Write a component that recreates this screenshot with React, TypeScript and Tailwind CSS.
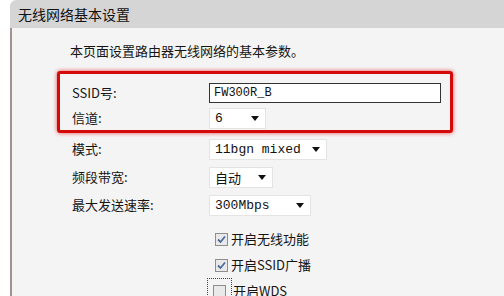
import React from "react";

const cjk = "font-['Noto_Sans_CJK_SC',sans-serif]";
const mono = "font-['Liberation_Mono','Noto_Sans_CJK_SC',monospace]";

const Arrow = () => (
  <svg width="8" height="5" viewBox="0 0 8 5" className="shrink-0">
    <path d="M0 0 L8 0 L4 5 Z" fill="#111" />
  </svg>
);

const Select = ({ value, width, cn }: { value: string; width: string; cn?: boolean }) => (
  <div
    className={`${width} h-[21px] bg-white border border-[#e4e4e4] flex items-center justify-between pl-[5px] pr-[6px] text-[13px] text-[#111] ${
      cn ? cjk : mono
    }`}
  >
    <span className="leading-none">{value}</span>
    <Arrow />
  </div>
);

const Check = ({ checked }: { checked: boolean }) => (
  <span className="w-[13px] h-[13px] border border-[#8e8e8e] bg-[#e9e9e9] flex items-center justify-center shrink-0">
    {checked && (
      <svg width="9" height="9" viewBox="0 0 9 9">
        <path d="M1 4.5 L3.5 7 L8 1.5" stroke="#4b6b9b" strokeWidth="1.8" fill="none" />
      </svg>
    )}
  </span>
);

const Row = ({ label, children, h = "h-[28px]" }: { label: string; children?: React.ReactNode; h?: string }) => (
  <div className={`flex items-center ${h}`}>
    <div className="w-[137px] text-[13px] text-[#151515]">{label}</div>
    {children}
  </div>
);

export default function App() {
  return (
    <div className={`w-[504px] h-[296px] overflow-hidden bg-white ${cjk}`}>
      <div className="ml-[10px] h-[28px] bg-[#d5d5d5] rounded-tl-[6px] flex items-center pl-[8px] text-[14px] text-[#111]">
        无线网络基本设置
      </div>
      <div className="ml-[10px] h-[268px] bg-[#f4f4f4] border-l-2 border-[#a39090] pl-[45px] pt-[13px]">
        <div className="h-[20px] flex items-center pl-[13px] text-[13px] text-[#151515]">
          本页面设置路由器无线网络的基本参数。
        </div>
        <div className="mt-[10px] w-[396px] border-[3px] border-[#d40a0a] rounded-[3px] shadow-[0_0_4px_rgba(230,0,0,0.7)] pl-[12px] pt-[5px]">
          <Row label="SSID号:" h="h-[27px]">
            <div className={`w-[232px] h-[20px] bg-white border border-[#333] flex items-center pl-[4px] text-[12px] text-[#111] ${mono}`}>
              FW300R_B
            </div>
          </Row>
          <Row label="信道:" h="h-[24px]">
            <Select value="6" width="w-[57px]" />
          </Row>
        </div>
        <div className="pl-[15px] mt-[2px]">
          <Row label="模式:">
            <Select value="11bgn mixed" width="w-[118px]" />
          </Row>
          <Row label="频段带宽:">
            <Select value="自动" width="w-[64px]" cn />
          </Row>
          <Row label="最大发送速率:">
            <Select value="300Mbps" width="w-[102px]" />
          </Row>
          <div className="pl-[137px] mt-[7px] text-[13px] text-[#151515]">
            <div className="h-[26px] flex items-center gap-[3px] ml-[6px]">
              <Check checked />
              <span>开启无线功能</span>
            </div>
            <div className="h-[26px] flex items-center gap-[3px] ml-[6px]">
              <Check checked />
              <span>开启SSID广播</span>
            </div>
            <div className="h-[26px] flex items-center gap-[1px] ml-[-2px]">
              <span className="border border-dotted border-[#444] px-[5px] py-[6px]">
                <Check checked={false} />
              </span>
              <span>开启WDS</span>
            </div>
          </div>
        </div>
      </div>
    </div>
  );
}
